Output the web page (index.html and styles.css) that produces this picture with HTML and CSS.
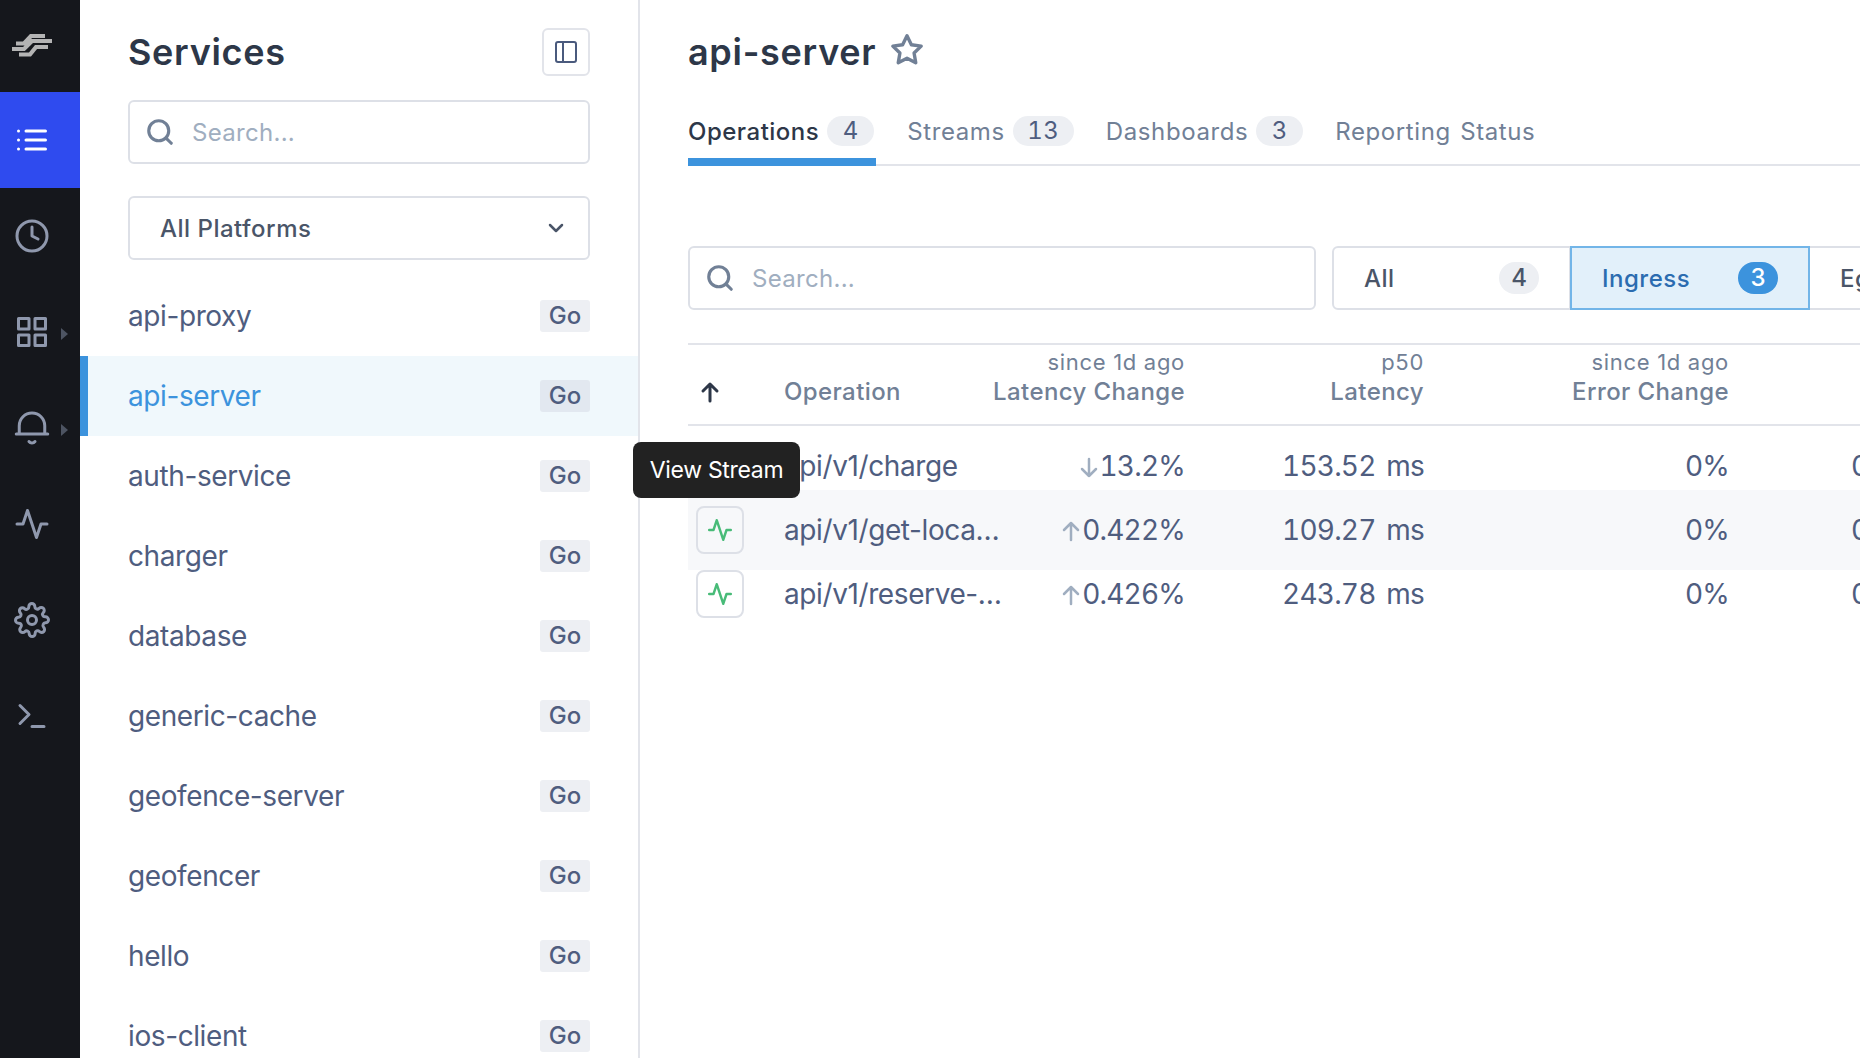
FILE: index.html
```html
<html>
<head>
<meta charset="utf-8">
<title>Services</title>
<link rel="stylesheet" href="styles.css">
</head>

<body>
<div class="app">

    <!-- Left nav -->
    <nav class="nav">
        <div class="nav-logo">
            <svg width="40" height="24" viewBox="0 0 40 24"><path d="M4 9.500H12L19 2H33M0 15H12L20 7H40M7 20.500H18L24 13H36"/></svg>
        </div>
        <div class="nav-item active">
            <svg class="icon" viewBox="0 0 24 24"><path d="M8 6H21M8 12H21M8 18H21M3 6H3.010M3 12H3.010M3 18H3.010"/></svg>
        </div>
        <div class="nav-item">
            <svg class="icon" viewBox="0 0 24 24"><circle cx="12" cy="12" r="10"/><path d="M12 6V12L16 14"/></svg>
        </div>
        <div class="nav-item caret">
            <svg class="icon" viewBox="0 0 24 24"><rect x="3" y="3" width="7" height="7"/><rect x="14" y="3" width="7" height="7"/><rect x="14" y="14" width="7" height="7"/><rect x="3" y="14" width="7" height="7"/></svg>
        </div>
        <div class="nav-item caret">
            <svg class="icon" viewBox="0 0 24 24"><path d="M1.500 16H22.500M3.500 16V10.500A8.500 8.500 0 0 1 20.500 10.500V16M10 21A2.500 2.500 0 0 0 14 21"/></svg>
        </div>
        <div class="nav-item">
            <svg class="icon" viewBox="0 0 24 24"><path d="M22 12H18L15 21L9 3L6 12H2"/></svg>
        </div>
        <div class="nav-item">
            <svg class="icon" viewBox="0 0 24 24"><circle cx="12" cy="12" r="3"/><path d="M19.400 15A1.650 1.650 0 0 0 19.730 16.820L19.790 16.880A2 2 0 1 1 16.960 19.710L16.900 19.650A1.650 1.650 0 0 0 14.100 20.820V21A2 2 0 0 1 10.100 21V20.910A1.650 1.650 0 0 0 7.300 19.740L7.240 19.800A2 2 0 1 1 4.410 16.970L4.470 16.910A1.650 1.650 0 0 0 3.300 14.110H3A2 2 0 0 1 3 10.110H3.090A1.650 1.650 0 0 0 4.260 7.310L4.200 7.250A2 2 0 1 1 7.030 4.420L7.090 4.480A1.650 1.650 0 0 0 9.890 3.310V3A2 2 0 0 1 13.890 3V3.090A1.650 1.650 0 0 0 16.690 4.260L16.750 4.200A2 2 0 1 1 19.580 7.030L19.520 7.090A1.650 1.650 0 0 0 20.690 9.890H21A2 2 0 0 1 21 13.890H20.910A1.650 1.650 0 0 0 19.400 15Z"/></svg>
        </div>
        <div class="nav-item">
            <svg class="icon" viewBox="0 0 24 24"><path d="M4 17L10 11L4 5M12 19H20"/></svg>
        </div>
    </nav>

    <!-- Services list -->
    <aside class="services">
        <div class="services-head">
            <div class="title-row">
                <h1 class="page-title">Services</h1>
                <div class="toggle-btn">
                    <svg width="24" height="24" viewBox="0 0 24 24"><rect x="2" y="2" width="20" height="20" rx="2"/><path d="M9 2V22"/></svg>
                </div>
            </div>
            <div class="search">
                <svg class="search-icon" viewBox="0 0 24 24"><circle cx="11" cy="11" r="8"/><path d="M21 21L16.650 16.650"/></svg>
                <span>Search...</span>
            </div>
            <div class="select">
                <span>All Platforms</span>
                <svg width="24" height="24" viewBox="0 0 24 24"><path d="M6 9L12 15L18 9"/></svg>
            </div>
        </div>
        <ul class="service-list">
            <li class="service"><span>api-proxy</span><span class="lang">Go</span></li>
            <li class="service selected"><span>api-server</span><span class="lang">Go</span></li>
            <li class="service"><span>auth-service</span><span class="lang">Go</span></li>
            <li class="service"><span>charger</span><span class="lang">Go</span></li>
            <li class="service"><span>database</span><span class="lang">Go</span></li>
            <li class="service"><span>generic-cache</span><span class="lang">Go</span></li>
            <li class="service"><span>geofence-server</span><span class="lang">Go</span></li>
            <li class="service"><span>geofencer</span><span class="lang">Go</span></li>
            <li class="service"><span>hello</span><span class="lang">Go</span></li>
            <li class="service"><span>ios-client</span><span class="lang">Go</span></li>
        </ul>
    </aside>

    <!-- Service detail -->
    <main class="detail">
        <div class="title-row detail-title">
            <h1 class="page-title">api-server</h1>
            <svg class="star" viewBox="0 0 24 24"><path d="M12 2L15.090 8.260L22 9.270L17 14.140L18.180 21.020L12 17.770L5.820 21.020L7 14.140L2 9.270L8.910 8.260Z"/></svg>
        </div>

        <div class="tabs">
            <div class="tab current">Operations <span class="pill">4</span></div>
            <div class="tab">Streams <span class="pill">13</span></div>
            <div class="tab">Dashboards <span class="pill">3</span></div>
            <div class="tab">Reporting Status</div>
        </div>

        <div class="filters">
            <div class="search filter-search">
                <svg class="search-icon" viewBox="0 0 24 24"><circle cx="11" cy="11" r="8"/><path d="M21 21L16.650 16.650"/></svg>
                <span>Search...</span>
            </div>
            <div class="segments">
                <div class="segment first">All <span class="count">4</span></div>
                <div class="segment on">Ingress <span class="count">3</span></div>
                <div class="segment">Egress <span class="count">1</span></div>
            </div>
        </div>

        <div class="table">
            <div class="table-head">
                <div class="sort-cell">
                    <svg width="24" height="24" viewBox="0 0 24 24"><path d="M12 21V4M5 11L12 4L19 11"/></svg>
                </div>
                <div class="head-cell left">Operation</div>
                <div class="head-cell"><small>since 1d ago</small>Latency Change</div>
                <div class="head-cell"><small>p50</small>Latency</div>
                <div class="head-cell"><small>since 1d ago</small>Error Change</div>
                <div class="head-cell"></div>
            </div>

            <div class="table-row">
                <div class="stream-btn"><svg width="26" height="26" viewBox="0 0 24 24"><path d="M22 12H18L15 21L9 3L6 12H2"/></svg></div>
                <div class="op-name">api/v1/charge</div>
                <div class="num"><svg class="trend" viewBox="0 0 24 24"><path d="M12 4V21M5 14L12 21L19 14"/></svg>13.2%</div>
                <div class="num">153.52 ms</div>
                <div class="num">0%</div>
                <div class="num">0%</div>
            </div>
            <div class="table-row hover">
                <div class="stream-btn"><svg width="26" height="26" viewBox="0 0 24 24"><path d="M22 12H18L15 21L9 3L6 12H2"/></svg></div>
                <div class="op-name">api/v1/get-location</div>
                <div class="num"><svg class="trend" viewBox="0 0 24 24"><path d="M12 21V4M5 11L12 4L19 11"/></svg>0.422%</div>
                <div class="num">109.27 ms</div>
                <div class="num">0%</div>
                <div class="num">0%</div>
            </div>
            <div class="table-row">
                <div class="stream-btn"><svg width="26" height="26" viewBox="0 0 24 24"><path d="M22 12H18L15 21L9 3L6 12H2"/></svg></div>
                <div class="op-name">api/v1/reserve-vehicle</div>
                <div class="num"><svg class="trend" viewBox="0 0 24 24"><path d="M12 21V4M5 11L12 4L19 11"/></svg>0.426%</div>
                <div class="num">243.78 ms</div>
                <div class="num">0%</div>
                <div class="num">0%</div>
            </div>
        </div>
    </main>

    <div class="tooltip">View Stream</div>
</div>
</body>
</html>
```

FILE: styles.css
```css
* {
    box-sizing: border-box;
}

body {
    margin: 0;
    height: 100vh;
    overflow: hidden;
    background: #fff;
    color: #4a5568;
    font-family: Inter, "Liberation Sans", sans-serif;
}

svg {
    fill: none;
    stroke-linecap: round;
    stroke-linejoin: round;
}

.app {
    display: flex;
    position: relative;
    height: 100vh;
    overflow: hidden;
}

/* Left nav */
.nav {
    width: 80px;
    flex-shrink: 0;
    background: #15171c;
}

.nav-logo {
    height: 92px;
    display: flex;
    align-items: center;
    justify-content: center;
    padding-right: 16px;
}

.nav-logo svg {
    stroke: #b4b4b4;
    stroke-width: 4.2;
    stroke-linecap: butt;
    stroke-linejoin: miter;
}

.nav-item {
    height: 96px;
    display: flex;
    align-items: center;
    justify-content: center;
    padding-right: 16px;
    position: relative;
    color: #8f98ad;
}

.nav-item.active {
    background: #2f4bef;
    color: #fff;
}

.icon {
    width: 36px;
    height: 36px;
    stroke: currentColor;
    stroke-width: 2;
}

.caret::after {
    content: "";
    position: absolute;
    left: 61px;
    top: 44px;
    border-left: 7px solid #4d5462;
    border-top: 6px solid transparent;
    border-bottom: 6px solid transparent;
}

/* Services list */
.services {
    width: 560px;
    flex-shrink: 0;
    border-right: 2px solid #e2e4ea;
    overflow: hidden;
}

.services-head {
    padding: 28px 48px 0;
}

.title-row {
    display: flex;
    align-items: center;
    justify-content: space-between;
    height: 48px;
}

.page-title {
    margin: 0;
    font-size: 36px;
    font-weight: 600;
    letter-spacing: 0.7px;
    color: #2d3748;
}

.toggle-btn {
    width: 48px;
    height: 48px;
    border: 2px solid #e2e4ea;
    border-radius: 6px;
    display: flex;
    align-items: center;
    justify-content: center;
}

.toggle-btn svg {
    stroke: #4a5a7d;
    stroke-width: 2;
}

.search {
    height: 64px;
    margin-top: 24px;
    border: 2px solid #dde0e7;
    border-radius: 6px;
    display: flex;
    align-items: center;
    padding-left: 15px;
    gap: 17px;
    font-size: 24px;
    color: #a0aec0;
    letter-spacing: 0.3px;
}

.search-icon {
    width: 30px;
    height: 30px;
    stroke: #718096;
    stroke-width: 2.500;
}

.select {
    height: 64px;
    margin-top: 32px;
    border: 2px solid #dde0e7;
    border-radius: 6px;
    display: flex;
    align-items: center;
    justify-content: space-between;
    padding: 0 20px 0 30px;
    font-size: 24px;
    font-weight: 500;
    letter-spacing: 0.5px;
}

.select svg {
    stroke: #4a5568;
    stroke-width: 2.500;
}

.service-list {
    list-style: none;
    margin: 16px 0 0;
    padding: 0;
}

.service {
    height: 80px;
    display: flex;
    align-items: center;
    justify-content: space-between;
    padding: 0 48px;
    font-size: 28px;
    letter-spacing: -0.4px;
    color: #4f5d7f;
}

.service.selected {
    background: #f0f8fc;
    border-left: 8px solid #3c93dd;
    padding-left: 40px;
    color: #3c93dd;
}

.lang {
    width: 50px;
    height: 32px;
    background: #edeff3;
    border-radius: 3px;
    color: #4f5d7f;
    font-size: 24px;
    font-weight: 500;
    letter-spacing: 0;
    line-height: 32px;
    text-align: center;
}

.selected .lang {
    background: #e2e8f0;
}

/* Service detail */
.detail {
    flex: 1;
    min-width: 0;
    padding: 28px 0 0 48px;
    overflow: hidden;
}

.detail-title {
    justify-content: flex-start;
    gap: 14px;
}

.star {
    width: 34px;
    height: 34px;
    stroke: #718096;
    stroke-width: 2.400;
    margin-top: -4px;
}

.tabs {
    display: flex;
    gap: 31px;
    margin-top: 28px;
    height: 62px;
    border-bottom: 2px solid #e2e4ea;
}

.tab {
    height: 62px;
    padding: 0 1px 8px 0;
    display: flex;
    align-items: center;
    gap: 8px;
    font-size: 24px;
    letter-spacing: 0.6px;
    word-spacing: 2px;
    color: #718096;
}

.tab.current {
    color: #2d3748;
    font-weight: 500;
    letter-spacing: 0.5px;
    border-bottom: 8px solid #3c93dd;
    padding: 0 2px 0 0;
}

.pill {
    min-width: 47px;
    height: 30px;
    padding: 0 14.500px;
    border-radius: 15px;
    background: #edeff3;
    color: #4f5d7f;
    font-weight: 400;
    font-variant-numeric: tabular-nums;
    letter-spacing: 0.5px;
    line-height: 30px;
    text-align: center;
}

.filters {
    display: flex;
    gap: 16px;
    margin-top: 80px;
}

.filter-search {
    width: 628px;
    flex-shrink: 0;
    margin-top: 0;
}

.segments {
    display: flex;
    flex-shrink: 0;
}

.segment {
    width: 239px;
    height: 64px;
    border: 2px solid #dde0e7;
    border-left: 0;
    display: flex;
    align-items: center;
    justify-content: space-between;
    padding: 0 30px;
    font-size: 24px;
    letter-spacing: 0.5px;
    font-weight: 500;
}

.segment.first {
    border-left: 2px solid #dde0e7;
    border-radius: 6px 0 0 6px;
}

.segment.on {
    width: 240px;
    background: #e2f0fa;
    border: 2px solid #72b5e8;
    color: #2b6cb0;
    margin-left: -1px;
}

.count {
    width: 40px;
    height: 32px;
    border-radius: 16px;
    background: #edeff3;
    line-height: 32px;
    text-align: center;
    letter-spacing: 0;
}

.on .count {
    background: #3c93dd;
    color: #fff;
}

.table {
    margin-top: 33px;
}

.table-head,
.table-row {
    display: grid;
    grid-template-columns: 96px 222px 179px 239px 305px 166px;
}

.table-head {
    height: 83px;
    border-top: 2px solid #e2e4ea;
    border-bottom: 2px solid #e2e4ea;
}

.sort-cell {
    display: flex;
    align-items: center;
    padding: 15px 0 0 10px;
}

.sort-cell svg {
    stroke: #2d3748;
    stroke-width: 3;
}

.head-cell {
    display: flex;
    flex-direction: column;
    justify-content: flex-start;
    align-items: flex-end;
    padding-top: 3px;
    font-size: 24px;
    font-weight: 500;
    letter-spacing: 0.4px;
    line-height: 29px;
    color: #718096;
    white-space: nowrap;
}

.head-cell.left {
    align-items: flex-start;
    padding-top: 32px;
}

.head-cell small {
    font-size: 22px;
    font-weight: 400;
    letter-spacing: 0.7px;
    line-height: 29px;
}

.table-row {
    height: 80px;
    margin-bottom: -16px;
    align-items: center;
    font-size: 28px;
    color: #4f5d7f;
}

.table-row.hover {
    background: #f7f8fa;
}

.stream-btn {
    width: 48px;
    height: 48px;
    margin-left: 8px;
    border: 2px solid #dde0e7;
    border-radius: 8px;
    display: flex;
    align-items: center;
    justify-content: center;
}

.stream-btn svg {
    stroke: #48bb78;
    stroke-width: 2.200;
}

.op-name {
    overflow: hidden;
    white-space: nowrap;
    text-overflow: ellipsis;
    letter-spacing: -0.4px;
}

.num {
    display: flex;
    justify-content: flex-end;
    align-items: center;
    white-space: nowrap;
    font-variant-numeric: tabular-nums;
    letter-spacing: -0.8px;
    word-spacing: 4px;
}

.trend {
    width: 24px;
    height: 24px;
    margin: 2px -1px 0 -2px;
    stroke: #a0aec0;
    stroke-width: 2.500;
}

.tooltip {
    position: absolute;
    left: 633px;
    top: 442px;
    width: 167px;
    height: 56px;
    border-radius: 8px;
    background: #222;
    color: #fff;
    font-size: 23px;
    letter-spacing: -0.3px;
    line-height: 56px;
    text-align: center;
}
```
